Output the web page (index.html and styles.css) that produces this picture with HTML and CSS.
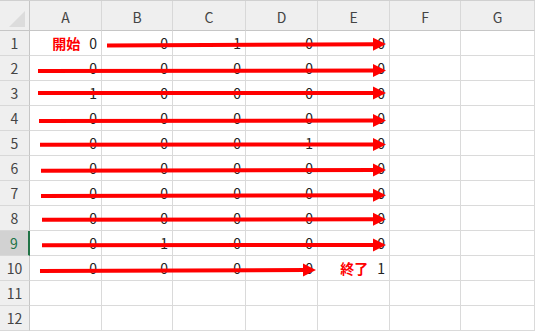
FILE: index.html
```html
<!DOCTYPE html>
<html lang="ja">
<head>
    <meta charset="UTF-8">
    <title>Sheet1</title>
    <link rel="stylesheet" href="styles.css">
</head>
<body>
    <div class="sheet">
        <div class="grid">
            <div class="corner"><span class="tri"></span></div>
            <div class="colhead">A</div>
            <div class="colhead">B</div>
            <div class="colhead">C</div>
            <div class="colhead">D</div>
            <div class="colhead">E</div>
            <div class="colhead">F</div>
            <div class="colhead">G</div>

            <div class="rowhead">1</div>
            <div class="cell"><span class="label">開始</span>0</div>
            <div class="cell">0</div>
            <div class="cell">1</div>
            <div class="cell">0</div>
            <div class="cell">0</div>
            <div class="cell"></div>
            <div class="cell"></div>

            <div class="rowhead">2</div>
            <div class="cell">0</div>
            <div class="cell">0</div>
            <div class="cell">0</div>
            <div class="cell">0</div>
            <div class="cell">0</div>
            <div class="cell"></div>
            <div class="cell"></div>

            <div class="rowhead">3</div>
            <div class="cell">1</div>
            <div class="cell">0</div>
            <div class="cell">0</div>
            <div class="cell">0</div>
            <div class="cell">0</div>
            <div class="cell"></div>
            <div class="cell"></div>

            <div class="rowhead">4</div>
            <div class="cell">0</div>
            <div class="cell">0</div>
            <div class="cell">0</div>
            <div class="cell">0</div>
            <div class="cell">0</div>
            <div class="cell"></div>
            <div class="cell"></div>

            <div class="rowhead">5</div>
            <div class="cell">0</div>
            <div class="cell">0</div>
            <div class="cell">0</div>
            <div class="cell">1</div>
            <div class="cell">0</div>
            <div class="cell"></div>
            <div class="cell"></div>

            <div class="rowhead">6</div>
            <div class="cell">0</div>
            <div class="cell">0</div>
            <div class="cell">0</div>
            <div class="cell">0</div>
            <div class="cell">0</div>
            <div class="cell"></div>
            <div class="cell"></div>

            <div class="rowhead">7</div>
            <div class="cell">0</div>
            <div class="cell">0</div>
            <div class="cell">0</div>
            <div class="cell">0</div>
            <div class="cell">0</div>
            <div class="cell"></div>
            <div class="cell"></div>

            <div class="rowhead">8</div>
            <div class="cell">0</div>
            <div class="cell">0</div>
            <div class="cell">0</div>
            <div class="cell">0</div>
            <div class="cell">0</div>
            <div class="cell"></div>
            <div class="cell"></div>

            <div class="rowhead selected">9</div>
            <div class="cell">0</div>
            <div class="cell">1</div>
            <div class="cell">0</div>
            <div class="cell">0</div>
            <div class="cell">0</div>
            <div class="cell"></div>
            <div class="cell"></div>

            <div class="rowhead">10</div>
            <div class="cell">0</div>
            <div class="cell">0</div>
            <div class="cell">0</div>
            <div class="cell">0</div>
            <div class="cell"><span class="label">終了</span>1</div>
            <div class="cell"></div>
            <div class="cell"></div>

            <div class="rowhead">11</div>
            <div class="cell"></div>
            <div class="cell"></div>
            <div class="cell"></div>
            <div class="cell"></div>
            <div class="cell"></div>
            <div class="cell"></div>
            <div class="cell"></div>

            <div class="rowhead">12</div>
            <div class="cell"></div>
            <div class="cell"></div>
            <div class="cell"></div>
            <div class="cell"></div>
            <div class="cell"></div>
            <div class="cell"></div>
            <div class="cell"></div>
        </div>

        <!-- arrows drawn over the cells -->
        <svg class="arrows" width="535" height="332" viewBox="0 0 535 332">
            <g stroke="#ff0000" stroke-width="4" fill="none">
                <line x1="107" y1="44.6" x2="376" y2="43.2"/>
                <line x1="38" y1="70" x2="376" y2="69.5"/>
                <line x1="38" y1="92" x2="376" y2="92"/>
                <line x1="39" y1="120" x2="376" y2="119.5"/>
                <line x1="40" y1="143.8" x2="376" y2="143.5"/>
                <line x1="41" y1="169.7" x2="376" y2="169"/>
                <line x1="41" y1="195" x2="376" y2="194.2"/>
                <line x1="42" y1="218.7" x2="376" y2="218.3"/>
                <line x1="42" y1="244.3" x2="376" y2="244"/>
                <line x1="40" y1="270" x2="305" y2="269"/>
            </g>
            <g fill="#ff0000">
                <polygon points="373,36.7 386,43 373,49.7"/>
                <polygon points="373,63 386,69.5 373,76"/>
                <polygon points="373,85.5 386,92 373,98.5"/>
                <polygon points="373,113 386,119.5 373,126"/>
                <polygon points="373,137 386,143.5 373,150"/>
                <polygon points="373,162.5 386,169 373,175.5"/>
                <polygon points="373,187.7 386,194.2 373,200.7"/>
                <polygon points="373,211.8 386,218.3 373,224.8"/>
                <polygon points="373,237.5 386,244 373,250.5"/>
                <polygon points="303,262.5 316,269 303,275.5"/>
            </g>
        </svg>
    </div>
</body>
</html>
```

FILE: styles.css
```css
body {
    margin: 0;
    background-color: #fff;
    font-family: "Noto Sans CJK JP", "Liberation Sans", sans-serif;
    color: #222;
}
.sheet {
    position: relative;
    width: 535px;
    height: 332px;
    overflow: hidden;
    border-top: 1px solid #d0d0d0;
    box-sizing: border-box;
}
.grid {
    display: grid;
    grid-template-columns: 30px 72px 71px 73px 72px 72px 71px 72px 2px;
    grid-template-rows: 30px repeat(12, 25px);
}
.corner {
    grid-column: 1;
    position: relative;
    background-color: #efefef;
    border-right: 1px solid #c6c6c6;
    border-bottom: 1px solid #c6c6c6;
}
.tri {
    position: absolute;
    right: 4px;
    bottom: 3px;
    width: 0;
    height: 0;
    border-left: 16px solid transparent;
    border-bottom: 16px solid #dcdcdc;
}
.colhead {
    display: flex;
    align-items: center;
    justify-content: center;
    background-color: #efefef;
    border-right: 1px solid #d8d8d8;
    border-bottom: 1px solid #c6c6c6;
    font-size: 14px;
    color: #444;
    padding-top: 2px;
}
.colhead:nth-child(8) {
    grid-column: 8 / span 2;
}
.rowhead {
    grid-column: 1;
    display: flex;
    align-items: center;
    justify-content: center;
    background-color: #efefef;
    border-right: 1px solid #c6c6c6;
    border-bottom: 1px solid #d8d8d8;
    font-size: 14px;
    color: #444;
}
.rowhead.selected {
    background-color: #d2d2d2;
    border-right: 2px solid #217346;
    color: #217346;
}
.cell {
    display: flex;
    align-items: center;
    justify-content: flex-end;
    padding-right: 4px;
    border-right: 1px solid #dadada;
    border-bottom: 1px solid #dadada;
    font-size: 14px;
    color: #222;
}
.grid > .cell:nth-child(8n) {
    grid-column: 8 / span 2;
}
.label {
    color: #ff0000;
    font-weight: bold;
    margin-right: 9px;
}
.arrows {
    position: absolute;
    left: 0;
    top: 0;
}
```
